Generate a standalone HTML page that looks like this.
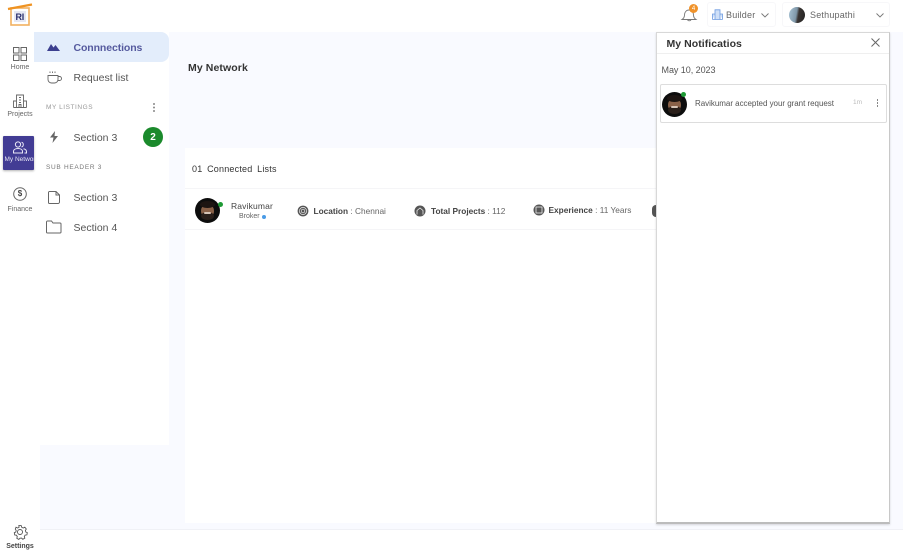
<!DOCTYPE html>
<html lang="en"><head><meta charset="utf-8"><title>My Network</title>
<style>
*{box-sizing:border-box}
html,body{margin:0;padding:0}
body{width:903px;height:560px;position:relative;overflow:hidden;background:#fff;font-family:"Liberation Sans",sans-serif;color:#444}
#w{position:absolute;left:0;top:0;width:903px;height:560px;filter:blur(.3px)}
.a{position:absolute}
.t{position:absolute;white-space:nowrap;line-height:1}
svg{position:absolute;overflow:visible}
</style></head><body><div id="w">
<!-- backgrounds -->
<div class="a" style="left:169px;top:32px;width:734px;height:497px;background:#f9faff"></div>
<div class="a" style="left:40px;top:445px;width:129px;height:84px;background:#f9faff"></div>
<div class="a" style="left:40px;top:529px;width:863px;height:1px;background:#f0f1f6"></div>
<div class="a" style="left:185px;top:148px;width:472px;height:375px;background:#fff"></div>
<div class="a" style="left:185px;top:188px;width:472px;height:42px;border-top:1px solid #f5f5f7;border-bottom:1px solid #f5f5f7"></div>

<!-- logo -->
<svg style="left:0;top:0" width="40" height="32" viewBox="0 0 40 32">
<rect x="11" y="8" width="18" height="17" fill="#fff" stroke="#f2b060" stroke-width="1.600"/>
<path d="M8 9 L32 4.500" stroke="#ef9322" stroke-width="2.400" fill="none"/>
<rect x="14" y="11" width="12" height="11" fill="#e6e8f3"/>
</svg>
<div class="t" style="left:15.500px;top:13px;font-size:9px;font-weight:bold;color:#2b2f6e;letter-spacing:-.3px">RI</div>

<!-- rail -->
<svg style="left:13px;top:47px" width="14" height="14" viewBox="0 0 14 14" fill="none" stroke="#666" stroke-width="1"><rect x=".5" y=".5" width="5.500" height="5.500"/><rect x="8" y=".5" width="5.500" height="5.500"/><rect x=".5" y="8" width="5.500" height="5.500"/><rect x="8" y="8" width="5.500" height="5.500"/></svg>
<div class="t" style="left:0;width:40px;text-align:center;top:64px;font-size:7px;color:#666">Home</div>
<svg style="left:13px;top:94px" width="14" height="14" viewBox="0 0 14 14" fill="none" stroke="#666" stroke-width=".9"><path d="M3.500 13.500V1h7v12.500M.5 13.500V7h3M10.500 7h3v6.500M.5 13.500h13M6 3.500h2M6 6h2M6 8.500h2M6 13.500v-3h2v3"/></svg>
<div class="t" style="left:0;width:40px;text-align:center;top:111px;font-size:7px;color:#666">Projects</div>
<div class="a" style="left:3px;top:136px;width:31px;height:34px;background:#423c94;border-radius:1px;box-shadow:0 1px 2px rgba(0,0,0,.3)"></div>
<svg style="left:13px;top:141px" width="14" height="13" viewBox="0 0 14 13" fill="none" stroke="#e9e8f6" stroke-width="1"><circle cx="5" cy="3.500" r="2.600"/><path d="M.5 12v-1.500C.5 8.500 2.500 7.500 5 7.500s4.500 1 4.500 3V12h-9z"/><path d="M8.500 1.200a2.500 2.500 0 0 1 0 4.800M10.500 7.800c1.800.4 3 1.300 3 3V12h-2"/></svg>
<div class="a" style="left:3px;top:156px;width:31px;height:9px;overflow:hidden"><div class="t" style="left:1.500px;top:1px;font-size:6.500px;color:#e4e3f3">My Network</div></div>
<svg style="left:13px;top:187px" width="14" height="14" viewBox="0 0 14 14" fill="none"><circle cx="7" cy="7" r="6.300" stroke="#666" stroke-width="1"/></svg>
<div class="t" style="left:13px;width:14px;text-align:center;top:190px;font-size:8px;font-weight:bold;color:#444">$</div>
<div class="t" style="left:0;width:40px;text-align:center;top:205.500px;font-size:7px;color:#666">Finance</div>
<svg style="left:13px;top:525px" width="14" height="14" viewBox="0 0 14 14" fill="none" stroke="#555" stroke-width=".9"><circle cx="7" cy="7" r="2.500"/><path d="M5.800.6h2.400l.5 1.700 1.500.7 1.600-.8 1.500 1.800-.9 1.400.4 1.600 1.500.6-.4 2.300-1.700.2-.9 1.400.5 1.700-2 1.100-1.200-1.200-1.600.1-1.200 1.200-2-1.100.5-1.700-.9-1.400-1.700-.2-.4-2.300 1.500-.6.400-1.600-.9-1.400L3 2.200l1.600.8 1.500-.7z"/></svg>
<div class="t" style="left:0;width:40px;text-align:center;top:543px;font-size:7px;font-weight:bold;color:#444">Settings</div>

<!-- side menu -->
<div class="a" style="left:34px;top:32px;width:135px;height:30px;background:#e3edfb;border-radius:0 8px 8px 0"></div>
<svg style="left:47px;top:43px" width="13" height="8" viewBox="0 0 13 8"><path d="M0 8 L4 1 L6.500 4.500 L8.500 2 L13 8Z" fill="#3c3f8f"/></svg>
<div class="t" style="left:73.500px;top:42.500px;font-size:10.500px;font-weight:bold;color:#555a9e;letter-spacing:-.1px">Connnections</div>
<svg style="left:47px;top:70px" width="15" height="14" viewBox="0 0 15 14" fill="none" stroke="#666" stroke-width=".9"><path d="M1 5.500h10v4a3.500 3.500 0 0 1-3.500 3.500h-3A3.500 3.500 0 0 1 1 9.500zM11 6.500h1.500a1.500 1.500 0 0 1 0 4H10.800M3 3V1.500M5.500 3V1.500M8 3V1.500"/></svg>
<div class="t" style="left:73.500px;top:72.500px;font-size:10.500px;color:#555">Request list</div>
<div class="t" style="left:46px;top:105px;font-size:6.500px;color:#999;letter-spacing:.55px">MY LISTINGS</div>
<div class="a" style="left:152.500px;top:103px;width:2px;height:2px;background:#888;box-shadow:0 3.500px 0 #888,0 7px 0 #888;border-radius:50%"></div>
<svg style="left:50px;top:131px" width="8" height="12" viewBox="0 0 8 12"><path d="M5 0 L0 6.500 H3.500 L2.500 12 L8 5 H4.500Z" fill="#666"/></svg>
<div class="t" style="left:73.500px;top:132.500px;font-size:10.500px;color:#555">Section 3</div>
<div class="a" style="left:143px;top:127px;width:20px;height:20px;border-radius:50%;background:#1b8a2c"></div>
<div class="t" style="left:143px;width:20px;text-align:center;top:132.500px;font-size:10px;font-weight:bold;color:#fff">2</div>
<div class="t" style="left:46px;top:165px;font-size:6.500px;color:#777;letter-spacing:.7px">SUB HEADER 3</div>
<svg style="left:48px;top:191px" width="12" height="13" viewBox="0 0 12 13" fill="none" stroke="#666" stroke-width="1"><path d="M1.500.5h6.500l3.500 3.500v7a1.500 1.500 0 0 1-1.500 1.500H1.500A1 1 0 0 1 .5 11.500v-10a1 1 0 0 1 1-1zM8 .5v3.500h3.500"/></svg>
<div class="t" style="left:73.500px;top:192.500px;font-size:10.500px;color:#555">Section 3</div>
<svg style="left:46px;top:220px" width="16" height="14" viewBox="0 0 16 14" fill="none" stroke="#666" stroke-width="1"><path d="M.5 2a1 1 0 0 1 1-1h4l1.500 2h7a1 1 0 0 1 1 1v8a1 1 0 0 1-1 1h-12.500a1 1 0 0 1-1-1z"/></svg>
<div class="t" style="left:73.500px;top:222.500px;font-size:10.500px;color:#555">Section 4</div>

<!-- header -->
<svg style="left:681px;top:7px" width="17" height="16" viewBox="0 0 17 16" fill="none" stroke="#777" stroke-width=".9"><path d="M1 12.500c1.500-1 2.500-2 2.500-4.500 0-3 2-5 4.500-5s4.500 2 4.500 5c0 2.500 1 3.500 2.500 4.500zM6.500 12.800a2 2 0 0 0 3.500 0"/></svg>
<div class="a" style="left:689px;top:4px;width:9px;height:9px;border-radius:50%;background:#f0932b"></div>
<div class="t" style="left:689px;width:9px;text-align:center;top:5.500px;font-size:6px;color:#fff">4</div>
<div class="a" style="left:707px;top:2px;width:69px;height:25px;border:1px solid #f7f7f9;border-radius:3px"></div>
<svg style="left:712px;top:9px" width="11" height="11" viewBox="0 0 11 11" fill="#cfe0f8" stroke="#6d9be0" stroke-width=".8"><path d="M3 10.500V.8h5v9.700M.5 10.500V5H3M8 5h2.500v5.500M.5 10.500h10"/></svg>
<div class="t" style="left:726px;top:10.500px;font-size:9px;color:#666;letter-spacing:.2px">Builder</div>
<svg style="left:761px;top:13px" width="8" height="5" viewBox="0 0 8 5" fill="none" stroke="#777" stroke-width=".9"><path d="M.5.500 4 4 7.500.5"/></svg>
<div class="a" style="left:782px;top:2px;width:108px;height:25px;border:1px solid #f7f7f9;border-radius:3px"></div>
<div class="a" style="left:789px;top:7px;width:16px;height:16px;border-radius:50%;background:linear-gradient(100deg,#a9c4d6 0%,#7f97a8 45%,#3a3533 58%,#222 100%)"></div>
<div class="t" style="left:810px;top:10.500px;font-size:9px;color:#666;letter-spacing:.2px">Sethupathi</div>
<svg style="left:876px;top:13px" width="8" height="5" viewBox="0 0 8 5" fill="none" stroke="#777" stroke-width=".9"><path d="M.5.500 4 4 7.500.5"/></svg>

<!-- main -->
<div class="t" style="left:188px;top:63px;font-size:10.500px;font-weight:bold;color:#333;letter-spacing:.1px">My Network</div>
<div class="t" style="left:192px;top:164.500px;font-size:9px;color:#333;word-spacing:2px;letter-spacing:.2px">01 Connected Lists</div>

<!-- row -->
<div class="a" style="left:195px;top:198px;width:25px;height:25px;border-radius:50%;background:#0d0d0d;overflow:hidden"><div class="a" style="left:6px;top:6px;width:13px;height:14px;border-radius:50%;background:#8a6148"></div><div class="a" style="left:5px;top:3px;width:15px;height:7px;border-radius:50%;background:#1d1512"></div><div class="a" style="left:6px;top:14px;width:13px;height:8px;border-radius:50%;background:#2a1f1a"></div><div class="a" style="left:9px;top:14px;width:7px;height:2px;background:#d6c3b5;border-radius:1px"></div></div>
<div class="a" style="left:217.500px;top:202px;width:5px;height:5px;border-radius:50%;background:#1e9a35"></div>
<div class="t" style="left:231px;top:202px;font-size:8.500px;color:#444;letter-spacing:.15px">Ravikumar</div>
<div class="t" style="left:239px;top:212.500px;font-size:7px;color:#666">Broker</div>
<div class="a" style="left:261.500px;top:215px;width:4px;height:4px;border-radius:50%;background:#4a9be6"></div>
<svg style="left:297px;top:205px" width="12" height="12" viewBox="0 0 12 12" fill="none"><circle cx="6" cy="6" r="5.400" fill="#555"/><circle cx="6" cy="6" r="3.600" stroke="#eee" stroke-width=".7"/><circle cx="6" cy="6" r="1.800" stroke="#eee" stroke-width=".7"/></svg>
<div class="t" style="left:313.500px;top:206.500px;font-size:8.300px;color:#666"><b style="color:#444">Location</b> : Chennai</div>
<svg style="left:414px;top:205px" width="12" height="12" viewBox="0 0 12 12" fill="none"><circle cx="6" cy="6" r="5.500" fill="#555"/><path d="M3 9.500V5.500L6 3l3 2.500v4" stroke="#eee" stroke-width=".8"/></svg>
<div class="t" style="left:431px;top:206.500px;font-size:8.300px;color:#666"><b style="color:#444">Total Projects</b> : 112</div>
<svg style="left:533px;top:204px" width="12" height="12" viewBox="0 0 12 12" fill="none"><circle cx="6" cy="6" r="5.500" fill="#555"/><rect x="3" y="3" width="6" height="6" stroke="#eee" stroke-width=".8"/></svg>
<div class="t" style="left:548.500px;top:206px;font-size:8.300px;color:#666"><b style="color:#444">Experience</b> : 11 Years</div>
<div class="a" style="left:652px;top:205px;width:4px;height:12px;background:#555;border-radius:6px 0 0 6px"></div>

<!-- notifications panel -->
<div class="a" style="left:656px;top:32px;width:234px;height:492px;background:#fff;border:1px solid #d8d8d8;border-right:1.500px solid #c8c8c8;border-bottom:2px solid #bcbcbc;box-shadow:0 1px 2px rgba(0,0,0,.15)"></div>
<div class="a" style="left:657px;top:53px;width:232px;height:1px;background:#efefef"></div>
<div class="t" style="left:666.500px;top:38.500px;font-size:10.500px;font-weight:bold;color:#333;letter-spacing:.05px">My Notificatios</div>
<svg style="left:871px;top:38px" width="9" height="9" viewBox="0 0 9 9" fill="none" stroke="#666" stroke-width="1"><path d="M.5.500l8 8M8.500.5l-8 8"/></svg>
<div class="t" style="left:661.500px;top:65.500px;font-size:9px;color:#555;letter-spacing:-.05px">May 10, 2023</div>
<div class="a" style="left:660px;top:84px;width:227px;height:39px;border:1px solid #ddd;border-radius:2px;background:#fff"></div>
<div class="a" style="left:662px;top:92px;width:25px;height:25px;border-radius:50%;background:#0d0d0d;overflow:hidden"><div class="a" style="left:6px;top:6px;width:13px;height:14px;border-radius:50%;background:#8a6148"></div><div class="a" style="left:5px;top:3px;width:15px;height:7px;border-radius:50%;background:#1d1512"></div><div class="a" style="left:6px;top:14px;width:13px;height:8px;border-radius:50%;background:#2a1f1a"></div><div class="a" style="left:9px;top:14px;width:7px;height:2px;background:#d6c3b5;border-radius:1px"></div></div>
<div class="a" style="left:681px;top:92px;width:5px;height:5px;border-radius:50%;background:#1e9a35"></div>
<div class="t" style="left:695px;top:99.500px;font-size:8px;color:#555;letter-spacing:-.03px">Ravikumar accepted your grant request</div>
<div class="t" style="left:853px;top:99.500px;font-size:6.500px;color:#bbb">1m</div>
<div class="a" style="left:876.500px;top:99px;width:1.500px;height:1.500px;background:#888;box-shadow:0 3px 0 #888,0 6px 0 #888"></div>
</div></body></html>
